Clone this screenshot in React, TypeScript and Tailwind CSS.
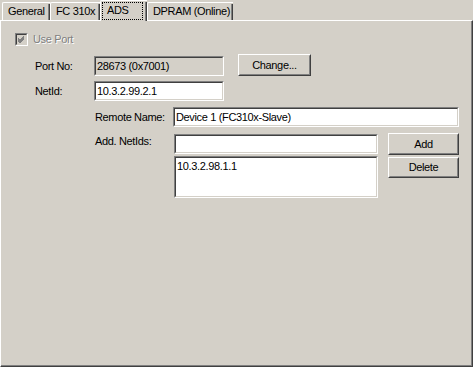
import React from 'react';

// Win2000-style property page: ADS tab
const Sunken: React.FC<{ className?: string; inner?: string; children?: React.ReactNode }> = ({ className = '', inner = 'bg-white', children }) => (
    <div className={`border border-t-[#808080] border-l-[#808080] border-b-white border-r-white ${className}`}>
        <div className={`h-full w-full border border-t-[#404040] border-l-[#404040] border-b-[#d4d0c8] border-r-[#d4d0c8] ${inner}`}>
            {children}
        </div>
    </div>
);

const Button: React.FC<{ className?: string; children: React.ReactNode }> = ({ className = '', children }) => (
    <div className={`border border-t-white border-l-white border-b-[#404040] border-r-[#404040] ${className}`}>
        <div className="h-full w-full border border-t-[#d4d0c8] border-l-[#d4d0c8] border-b-[#808080] border-r-[#808080] flex items-center justify-center">
            {children}
        </div>
    </div>
);

const Tab: React.FC<{ label: string; w: string; active?: boolean }> = ({ label, w, active }) => {
    if (active) {
        return (
            <div className={`${w} h-[21px] -mb-[1px] relative z-10 bg-[#d4d0c8] border-l border-t border-l-white border-t-white rounded-tl-[2px] flex`}>
                <div className="flex-1 pt-[1px] pl-[1px]">
                    <div className="h-[18px] w-[41px] border border-dotted border-black flex items-center pl-[4px] pb-[1px]">{label}</div>
                </div>
                <div className="w-[1px] mt-[1px] bg-[#808080]" />
                <div className="w-[1px] mt-[1px] bg-[#404040]" />
            </div>
        );
    }
    return (
        <div className={`${w} h-[18px] bg-[#d4d0c8] border-l border-t border-l-white border-t-white rounded-tl-[2px] flex`}>
            <div className="flex-1 flex items-center pl-[5px] pb-[1px]">{label}</div>
            <div className="w-[1px] mt-[1px] bg-[#808080]" />
            <div className="w-[1px] mt-[1px] bg-[#404040]" />
        </div>
    );
};

const App: React.FC = () => {
    return (
        <div className="w-[473px] h-[367px] bg-[#d4d0c8] text-[11px] leading-[13px] text-black tracking-[-0.35px] font-['Tahoma','Liberation_Sans',sans-serif] flex flex-col overflow-hidden">
            {/* tabs */}
            <div className="h-[20px] flex items-end pl-[2px]">
                <Tab label="General" w="w-[48px]" />
                <Tab label="FC 310x" w="w-[50px]" />
                <Tab label="ADS" w="w-[47px]" active />
                <Tab label="DPRAM (Online)" w="w-[86px]" />
            </div>

            {/* page */}
            <div className="flex-1 border border-t-white border-l-white border-r-[#404040] border-b-[#404040]">
                <div className="h-full border-r border-b border-r-[#808080] border-b-[#808080] flex flex-col">
                    {/* use port */}
                    <div className="mt-[12px] h-[13px] flex items-center pl-[14px]">
                        <Sunken className="w-[13px] h-[13px]" inner="bg-[#d4d0c8]">
                            <svg width="9" height="9" viewBox="0 0 9 9" className="block">
                                <path d="M1 3.5 L3 5.5 L7 1.5 M1 4.5 L3 6.5 L7 2.5 M1 5.5 L3 7.5 L7 3.5" stroke="#808080" strokeWidth="1" fill="none" shapeRendering="crispEdges" />
                            </svg>
                        </Sunken>
                        <span className="ml-[5px] text-[#808080] [text-shadow:1px_1px_0_#fff]">Use Port</span>
                    </div>

                    {/* port no */}
                    <div className="mt-[8px] h-[22px] flex items-end pl-[34px]">
                        <div className="w-[59px] h-[20px] flex items-center">Port No:</div>
                        <Sunken className="w-[130px] h-[20px]" inner="bg-[#d4d0c8] flex items-center pl-[1px]">
                            28673 (0x7001)
                        </Sunken>
                        <Button className="ml-[14px] w-[73px] h-[22px]">Change...</Button>
                    </div>

                    {/* netid */}
                    <div className="mt-[5px] h-[20px] flex items-center pl-[34px]">
                        <div className="w-[59px]">NetId:</div>
                        <Sunken className="w-[130px] h-[20px]" inner="bg-white flex items-center pl-[1px]">
                            10.3.2.99.2.1
                        </Sunken>
                    </div>

                    {/* remote name */}
                    <div className="mt-[6px] h-[20px] flex items-center pl-[94px]">
                        <div className="w-[78px]">Remote Name:</div>
                        <Sunken className="w-[286px] h-[20px]" inner="bg-white flex items-center pl-[1px]">
                            Device 1 (FC310x-Slave)
                        </Sunken>
                    </div>

                    {/* additional netids */}
                    <div className="mt-[6px] flex items-start pl-[94px]">
                        <div className="w-[79px] mt-[2px]">Add. NetIds:</div>
                        <div className="flex flex-col mt-[1px]">
                            <Sunken className="w-[204px] h-[20px]" />
                            <Sunken className="w-[204px] h-[42px] mt-[2px]" inner="bg-white pl-[1px] pt-[2px]">
                                10.3.2.98.1.1
                            </Sunken>
                        </div>
                        <div className="flex flex-col ml-[10px]">
                            <Button className="w-[71px] h-[22px]">Add</Button>
                            <Button className="w-[71px] h-[21px] mt-[2px]">Delete</Button>
                        </div>
                    </div>
                </div>
            </div>
        </div>
    );
};

export default App;
